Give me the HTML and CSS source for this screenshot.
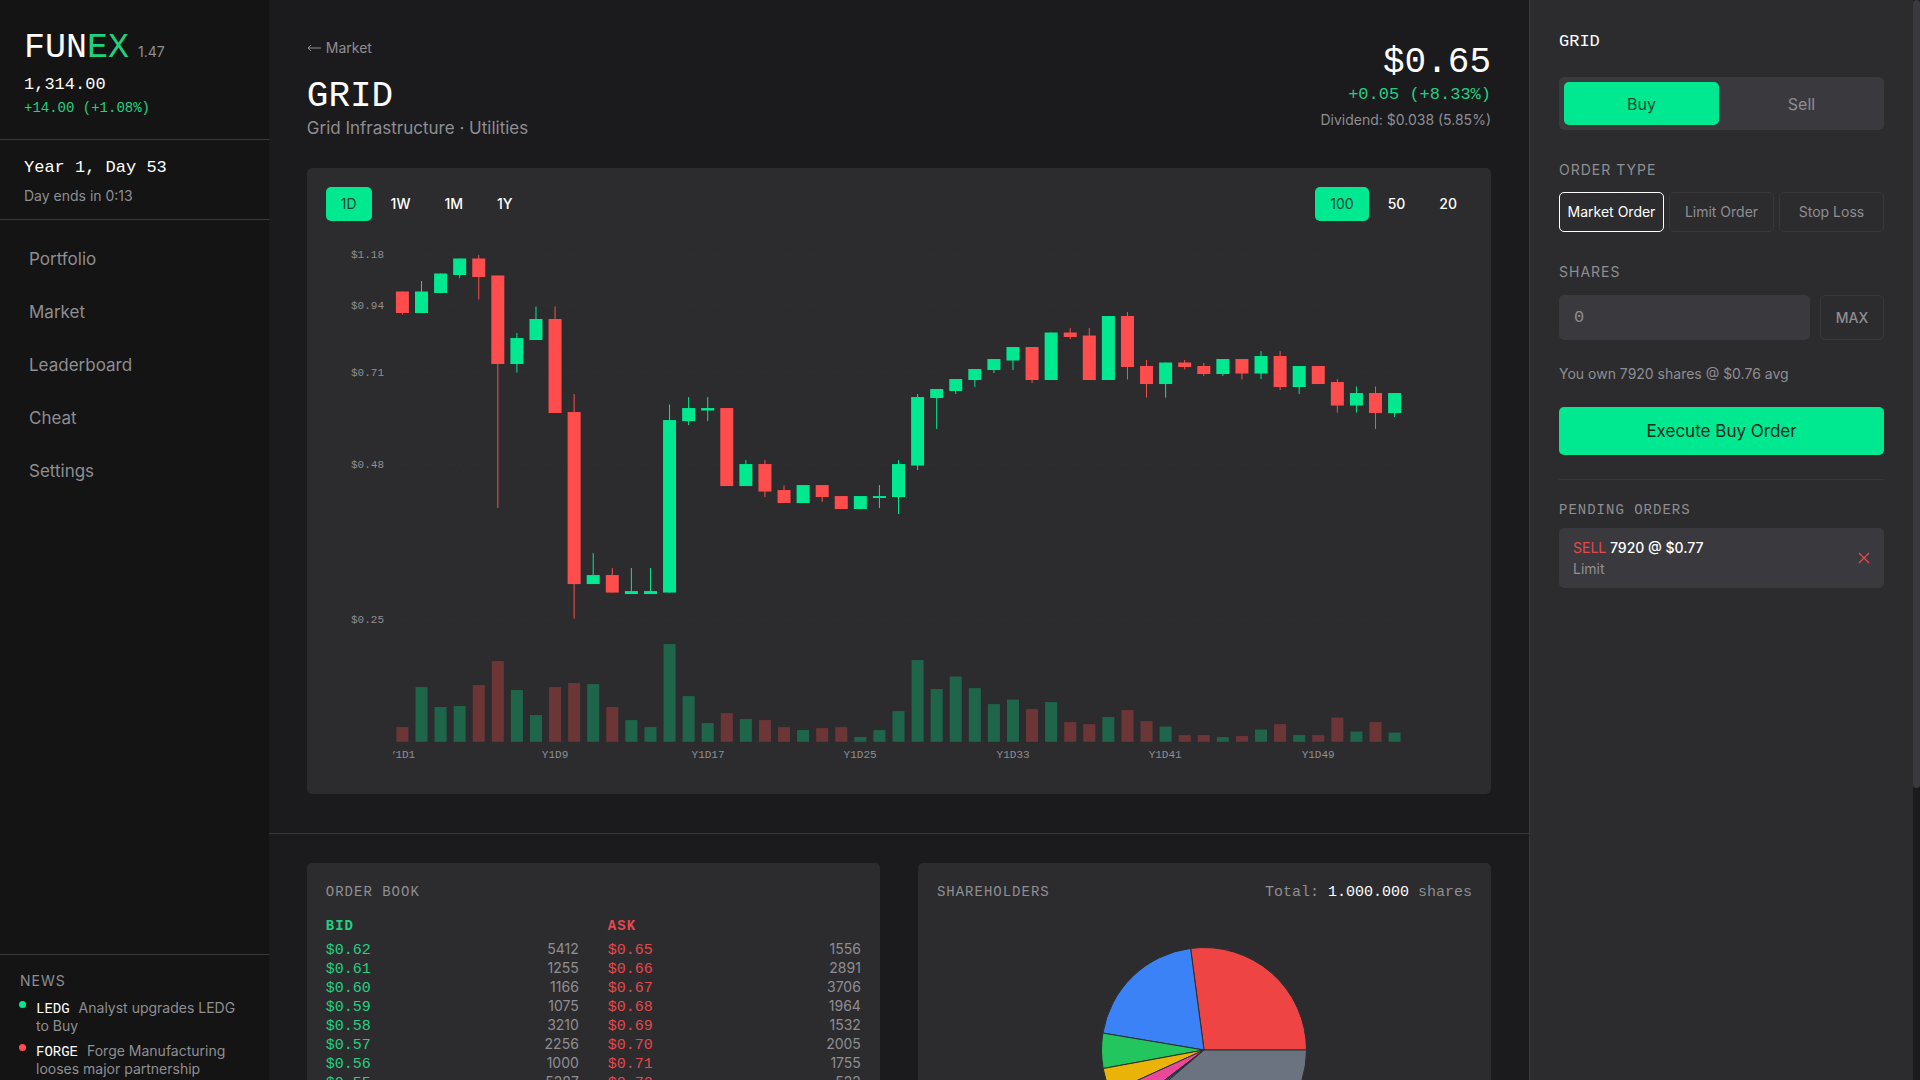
FILE: index.html
```html
<!DOCTYPE html>
<html lang="en">
<head>
<meta charset="utf-8">
<meta name="viewport" content="width=device-width, initial-scale=1">
<title>FUNEX – GRID</title>
<link rel="stylesheet" href="styles.css">
</head>
<body>
<div class="app">
  <aside class="sidebar">
    <header class="account">
      <div class="brand"><span class="logo">FUN<span class="logo-accent">EX</span></span><span class="version">1.47</span></div>
      <div class="balance">1,314.00</div>
      <div class="balance-change">+14.00 (+1.08%)</div>
    </header>
    <section class="clock">
      <div class="clock-day">Year 1, Day 53</div>
      <div class="clock-left">Day ends in 0:13</div>
    </section>
    <nav class="nav">
      <a href="#portfolio">Portfolio</a>
      <a href="#market">Market</a>
      <a href="#leaderboard">Leaderboard</a>
      <a href="#cheat">Cheat</a>
      <a href="#settings">Settings</a>
    </nav>
    <section class="news">
      <h2 class="news-title">NEWS</h2>
      <ul class="news-list">
        <li class="news-item up"><b>LEDG</b>Analyst upgrades LEDG to Buy</li>
        <li class="news-item down"><b>FORGE</b>Forge Manufacturing looses major partnership</li>
      </ul>
    </section>
  </aside>

  <main class="main">
    <section class="overview">
      <header class="stock-header">
        <div>
          <a class="back" href="#market"><svg class="arrow" viewBox="0 0 14 8" width="14" height="8"><path d="M14 4H1M4 1L1 4L4 7"/></svg>Market</a>
          <h1 class="ticker">GRID</h1>
          <p class="company">Grid Infrastructure · Utilities</p>
        </div>
        <div class="quote">
          <div class="price">$0.65</div>
          <div class="price-change">+0.05 (+8.33%)</div>
          <div class="dividend">Dividend: $0.038 (5.85%)</div>
        </div>
      </header>
      <div class="card">
        <div class="chart-bar">
          <div class="switch">
            <button type="button" class="chip active">1D</button>
            <button type="button" class="chip">1W</button>
            <button type="button" class="chip">1M</button>
            <button type="button" class="chip">1Y</button>
          </div>
          <div class="switch">
            <button type="button" class="chip active">100</button>
            <button type="button" class="chip">50</button>
            <button type="button" class="chip">20</button>
          </div>
        </div>
        <svg class="chart" viewBox="326 221 1146 554" role="img" aria-label="GRID price and volume by day">
          <defs><clipPath id="plot"><rect x="393" y="221" width="1079" height="554"/></clipPath></defs>
          <g class="grid">
            <path d="M393 254.5H1402M393 305.5H1402M393 372.5H1402M393 464.5H1402M393 619.5H1402"/>
          </g>
          <g class="price-labels">
            <text x="384" y="258">$1.18</text>
            <text x="384" y="309">$0.94</text>
            <text x="384" y="376">$0.71</text>
            <text x="384" y="468">$0.48</text>
            <text x="384" y="623">$0.25</text>
          </g>
          <g id="volume"></g>
          <g id="candles"></g>
          <g class="day-labels" clip-path="url(#plot)">
            <text x="402" y="758">Y1D1</text>
            <text x="555" y="758">Y1D9</text>
            <text x="708" y="758">Y1D17</text>
            <text x="860" y="758">Y1D25</text>
            <text x="1013" y="758">Y1D33</text>
            <text x="1165" y="758">Y1D41</text>
            <text x="1318" y="758">Y1D49</text>
          </g>
        </svg>
      </div>
    </section>

    <section class="details">
      <div class="card">
        <h2 class="card-title">ORDER BOOK</h2>
        <div class="book">
          <table class="side bid">
            <thead><tr><th colspan="2">BID</th></tr></thead>
            <tbody>
              <tr><td>$0.62</td><td>5412</td></tr>
              <tr><td>$0.61</td><td>1255</td></tr>
              <tr><td>$0.60</td><td>1166</td></tr>
              <tr><td>$0.59</td><td>1075</td></tr>
              <tr><td>$0.58</td><td>3210</td></tr>
              <tr><td>$0.57</td><td>2256</td></tr>
              <tr><td>$0.56</td><td>1000</td></tr>
              <tr><td>$0.55</td><td>5287</td></tr>
            </tbody>
          </table>
          <table class="side ask">
            <thead><tr><th colspan="2">ASK</th></tr></thead>
            <tbody>
              <tr><td>$0.65</td><td>1556</td></tr>
              <tr><td>$0.66</td><td>2891</td></tr>
              <tr><td>$0.67</td><td>3706</td></tr>
              <tr><td>$0.68</td><td>1964</td></tr>
              <tr><td>$0.69</td><td>1532</td></tr>
              <tr><td>$0.70</td><td>2005</td></tr>
              <tr><td>$0.71</td><td>1755</td></tr>
              <tr><td>$0.72</td><td>522</td></tr>
            </tbody>
          </table>
        </div>
      </div>
      <div class="card">
        <div class="holders-head">
          <h2 class="card-title">SHAREHOLDERS</h2>
          <div class="total">Total: <b>1.000.000</b> shares</div>
        </div>
        <svg class="pie" id="pie" viewBox="-103 -103 206 206" role="img" aria-label="Share of each holder"></svg>
      </div>
    </section>
  </main>

  <aside class="trade">
    <h2 class="trade-title">GRID</h2>
    <div class="side-toggle">
      <button type="button" class="side-option active">Buy</button>
      <button type="button" class="side-option">Sell</button>
    </div>
    <div class="label" id="type-label">ORDER TYPE</div>
    <div class="types" role="group" aria-labelledby="type-label">
      <button type="button" class="type active">Market Order</button>
      <button type="button" class="type">Limit Order</button>
      <button type="button" class="type">Stop Loss</button>
    </div>
    <label class="label" for="shares">SHARES</label>
    <div class="shares-row">
      <input class="shares" id="shares" type="text" inputmode="numeric" placeholder="0">
      <button type="button" class="max">MAX</button>
    </div>
    <p class="owned">You own 7920 shares @ $0.76 avg</p>
    <button type="button" class="execute">Execute Buy Order</button>
    <section class="pending">
      <h3 class="card-title">PENDING ORDERS</h3>
      <div class="order">
        <div>
          <div class="order-line"><span class="order-side">SELL</span> 7920 @ $0.77</div>
          <div class="order-kind">Limit</div>
        </div>
        <button type="button" class="cancel" aria-label="Cancel order">
          <svg viewBox="0 0 12 12" width="12" height="12"><path d="M1 1L11 11M11 1L1 11"/></svg>
        </button>
      </div>
    </section>
  </aside>
  <div class="scrollbar"><div class="thumb"></div></div>
</div>
<script src="chart.js"></script>
</body>
</html>
```
FILE: styles.css
```css
:root {
  --bg: #1b1b1d;
  --sidebar: #141414;
  --card: #2c2c2e;
  --control: #3a3a3e;
  --line: #39393b;
  --muted: #8e8e93;
  --green: #00e890;
  --red: #ff4d4d;
  --green-text: #22d080;
  --red-text: #e5484d;
  --sans: Inter, "Liberation Sans", sans-serif;
  --mono: "Liberation Mono", monospace;
}

* { box-sizing: border-box; margin: 0; padding: 0; }

body {
  background: var(--bg);
  color: #fff;
  font: 14px/20px var(--sans);
}

button, input { border: 0; background: none; color: inherit; font: inherit; }
a { color: inherit; text-decoration: none; }
ul { list-style: none; }

.app { display: flex; height: 100vh; overflow: hidden; }

/* Sidebar */
.sidebar {
  display: flex;
  flex-direction: column;
  flex: 0 0 14%;
  background: var(--sidebar);
}
.account { padding: 26px 24px 23px; border-bottom: 1px solid var(--line); }
.brand { display: flex; align-items: baseline; gap: 9px; }
.logo { font: 35px/44px var(--mono); }
.logo-accent { color: var(--green-text); }
.version { color: var(--muted); }
.balance { font: 17px/30px var(--mono); }
.balance-change { font: 14px/16px var(--mono); color: var(--green-text); }
.clock { padding: 14px 24px 11px; border-bottom: 1px solid var(--line); }
.clock-day { font: 17px/28px var(--mono); margin-bottom: 2px; }
.clock-left { line-height: 24px; color: var(--muted); }
.nav { display: flex; flex-direction: column; gap: 5px; padding: 15px 29px; }
.nav a { color: var(--muted); font-size: 17px; line-height: 48px; }
.news { margin-top: auto; padding: 16px 20px 2px; border-top: 1px solid var(--line); }
.news-title {
  margin-bottom: 8px;
  color: var(--muted);
  font-size: 14px;
  font-weight: 400;
  line-height: 20px;
  letter-spacing: 1px;
}
.news-list { display: flex; flex-direction: column; gap: 7px; }
.news-item { position: relative; padding-left: 16px; color: var(--muted); line-height: 18px; }
.news-item b { margin-right: 9px; color: #fff; font: 14px/14px var(--mono); }
.news-item::before {
  content: "";
  position: absolute;
  left: -1px;
  top: 2px;
  width: 7px;
  height: 7px;
  border-radius: 50%;
}
.news-item.up::before { background: var(--green); }
.news-item.down::before { background: var(--red); }

/* Main column */
.main { flex: 1; min-width: 0; overflow: hidden; }
.overview { padding: 38px 38px 39px; border-bottom: 1px solid var(--line); }
.stock-header { display: flex; justify-content: space-between; margin-bottom: 30px; }
.back {
  display: flex;
  align-items: center;
  gap: 5px;
  margin-bottom: 18px;
  color: var(--muted);
  line-height: 20px;
}
.arrow { fill: none; stroke: currentColor; }
.ticker { font: 36px/42px var(--mono); }
.company { color: var(--muted); font-size: 17px; line-height: 20px; }
.quote { padding-top: 4px; text-align: right; }
.price { font: 36px/42px var(--mono); }
.price-change { font: 17px/22px var(--mono); color: var(--green-text); }
.dividend { color: var(--muted); line-height: 28px; }

.card { padding: 19px; border-radius: 5px; background: var(--card); }
.chart-bar { display: flex; justify-content: space-between; }
.switch { display: flex; gap: 4px; }
.chip {
  height: 34px;
  padding: 0 15px;
  border-radius: 5px;
  font-weight: 500;
}
.chip.active { background: var(--green); color: #0d4a30; font-weight: 400; }
.chart { display: block; width: 100%; }
.chart text { fill: var(--muted); font: 11px var(--mono); }
.price-labels { text-anchor: end; }
.day-labels { text-anchor: middle; }
.grid { stroke: #2f2f31; stroke-dasharray: 3 3; }
.rise { fill: var(--green); }
.fall { fill: var(--red); }
#volume { opacity: 0.3; }

.details {
  display: grid;
  grid-template-columns: 1fr 1fr;
  gap: 38px;
  padding: 29px 38px 38px;
}
.card-title {
  color: var(--muted);
  font: 14px/20px var(--mono);
  letter-spacing: 1px;
}
.book { display: grid; grid-template-columns: 1fr 1fr; gap: 29px; margin-top: 13px; }
.side { width: 100%; border-collapse: collapse; align-self: start; }
.side th { padding-bottom: 4px; font: bold 14px/22px var(--mono); letter-spacing: 1px; text-align: left; }
.side td { height: 19px; line-height: 16px; vertical-align: baseline; }
.side td:first-child { font: 15px/16px var(--mono); }
.side td:last-child { color: var(--muted); text-align: right; }
.bid { color: var(--green-text); }
.ask { color: var(--red-text); }
.holders-head { display: flex; justify-content: space-between; align-items: baseline; }
.total { color: var(--muted); font: 15px/20px var(--mono); }
.total b { color: #fff; font-weight: 400; }
.pie { display: block; width: 206px; margin: 44px auto 0; }
.pie path { stroke: var(--card); stroke-width: 1; }

/* Trade panel */
.trade {
  flex: 0 0 20%;
  padding: 30px 29px;
  border-left: 1px solid var(--line);
  background: var(--card);
}
.trade-title { margin-bottom: 23px; font: 17px/24px var(--mono); }
.side-toggle { display: flex; gap: 5px; padding: 5px; border-radius: 5px; background: var(--control); }
.side-option { flex: 1; height: 43px; border-radius: 5px; color: var(--muted); font-size: 16px; }
.side-option.active { background: var(--green); color: #0d4a30; }
.label {
  display: block;
  margin: 30px 0 12px;
  color: var(--muted);
  line-height: 20px;
  letter-spacing: 1px;
}
.types { display: grid; grid-template-columns: repeat(3, 1fr); gap: 5px; }
.type {
  height: 40px;
  border: 1px solid var(--line);
  border-radius: 5px;
  color: var(--muted);
  white-space: nowrap;
}
.type.active { border-color: #fff; color: #fff; }
.shares-row { display: flex; gap: 10px; padding-top: 1px; }
.shares {
  flex: 1;
  min-width: 0;
  height: 45px;
  padding: 0 15px;
  border-radius: 5px;
  background: var(--control);
  font: 17px/24px var(--mono);
}
.shares::placeholder { color: var(--muted); }
.max {
  width: 64px;
  height: 45px;
  border: 1px solid var(--line);
  border-radius: 5px;
  color: var(--muted);
  font-weight: 500;
}
.owned { margin: 24px 0 23px; color: var(--muted); line-height: 20px; }
.execute {
  display: block;
  width: 100%;
  height: 48px;
  border-radius: 5px;
  background: var(--green);
  color: #0b2e1f;
  font-size: 17px;
}
.pending { margin-top: 24px; padding-top: 20px; border-top: 1px solid var(--line); }
.order {
  display: flex;
  align-items: center;
  justify-content: space-between;
  margin-top: 8px;
  padding: 9px 14px;
  border-radius: 5px;
  background: var(--control);
}
.order-line, .order-kind { line-height: 21px; }
.order-line { font-weight: 500; }
.order-side { color: var(--red-text); font-weight: 400; }
.order-kind { color: var(--muted); }
.cancel { display: flex; }
.cancel path { fill: none; stroke: var(--red-text); stroke-width: 1.3; }

.scrollbar { flex: 0 0 7px; background: var(--bg); }
.thumb { height: 73%; border-radius: 4px; background: var(--control); }
```
FILE: chart.js
```javascript
const NS = "http://www.w3.org/2000/svg";

// direction, high, body top, body bottom, low, top of volume bar
const days = [
  [0, 291.5, 291.5, 313, 314.5, 727], [1, 281, 291.5, 313, 313, 687],
  [1, 273.5, 273.5, 293, 293, 707], [1, 258.5, 258.5, 275, 278, 706],
  [0, 255, 258.5, 277, 299.5, 685], [0, 275.5, 275.5, 364, 508, 661],
  [1, 333, 338, 364, 372.5, 690], [1, 306.5, 319, 340, 340, 715],
  [0, 306.5, 319, 413, 413, 687], [0, 394, 412, 584, 618.5, 683],
  [1, 553, 575, 584, 584, 684], [0, 568, 575, 592.5, 592.5, 707],
  [1, 568, 591, 594, 594, 720], [1, 568, 591, 594, 594, 727],
  [1, 404.5, 420, 592.5, 592.5, 644], [1, 397, 408, 421, 425, 696],
  [1, 397, 408, 410.5, 421, 723], [0, 408, 408, 486, 486, 713],
  [1, 460, 464, 486, 486, 719], [0, 460, 464, 491.5, 497, 720],
  [0, 485.5, 490, 503, 503, 727], [1, 485, 485, 503, 503, 730],
  [0, 485, 485, 497, 502, 728], [0, 496, 496, 509, 509, 727],
  [1, 496, 496, 509, 509, 737], [1, 485, 496, 498, 508, 730],
  [1, 460, 464, 497, 514, 711], [1, 394, 397, 465.5, 470, 660],
  [1, 389, 389, 398, 429, 689], [1, 379, 379, 391, 394, 676.5],
  [1, 369, 369, 380, 387, 688], [1, 359, 359, 370, 373, 704],
  [1, 347, 347, 360.5, 370, 699.5], [0, 347, 347, 380, 383, 709],
  [1, 332.5, 332.5, 380, 380, 702], [0, 328, 332.5, 337, 339, 722],
  [0, 328, 335.5, 380, 380, 724], [1, 316, 316, 380, 380, 717],
  [0, 312, 316, 367, 379.5, 710], [0, 360, 366, 384, 397.5, 721],
  [1, 362.5, 362.5, 384, 397.5, 726.5], [0, 360, 362.5, 367, 369.5, 735],
  [0, 363, 366, 374, 376, 735], [1, 359, 359, 374, 376, 737],
  [0, 359, 359, 373.5, 379.5, 736], [1, 351, 356, 373.5, 379, 729.5],
  [0, 351, 356, 387, 390, 724], [1, 366, 366, 387, 394, 735],
  [0, 366, 366, 384, 384, 735], [0, 379, 382, 405.5, 412.5, 717.5],
  [1, 386.5, 393, 405.5, 412.5, 731.5], [0, 386.5, 393, 413, 429, 722],
  [1, 393, 393, 413, 417, 732.5]
];
const volumeBase = 741.7;

function add(parent, name, attrs) {
  const el = document.createElementNS(NS, name);
  for (const key in attrs) el.setAttribute(key, attrs[key]);
  parent.appendChild(el);
}

const candles = document.getElementById("candles");
const volume = document.getElementById("volume");
days.forEach(([up, high, top, bottom, low, vol], i) => {
  const x = 402.4 + i * 19.077;
  const cls = up ? "rise" : "fall";
  add(candles, "rect", { class: cls, x: x - 0.5, y: high, width: 1, height: low - high });
  add(candles, "rect", { class: cls, x: x - 6.5, y: top, width: 13, height: bottom - top });
  add(volume, "rect", { class: cls, x: x - 6, y: vol, width: 12, height: volumeBase - vol });
});

// end angle of each slice in degrees, counter-clockwise from the right
const slices = [
  [97.5, "#ef4444"], [170.5, "#3b82f6"], [190.4, "#22c55e"], [204.5, "#eab308"],
  [217.5, "#ec4899"], [219, "#6366f1"], [220.5, "#14b8a6"], [360, "#6b7280"]
];
const radius = 102.5;
const point = (deg) => {
  const a = deg * Math.PI / 180;
  return (radius * Math.cos(a)).toFixed(2) + " " + (-radius * Math.sin(a)).toFixed(2);
};
let start = 0;
for (const [end, fill] of slices) {
  const large = end - start > 180 ? 1 : 0;
  add(document.getElementById("pie"), "path", {
    d: `M0 0L${point(start)}A${radius} ${radius} 0 ${large} 0 ${point(end)}Z`, fill
  });
  start = end;
}
```
